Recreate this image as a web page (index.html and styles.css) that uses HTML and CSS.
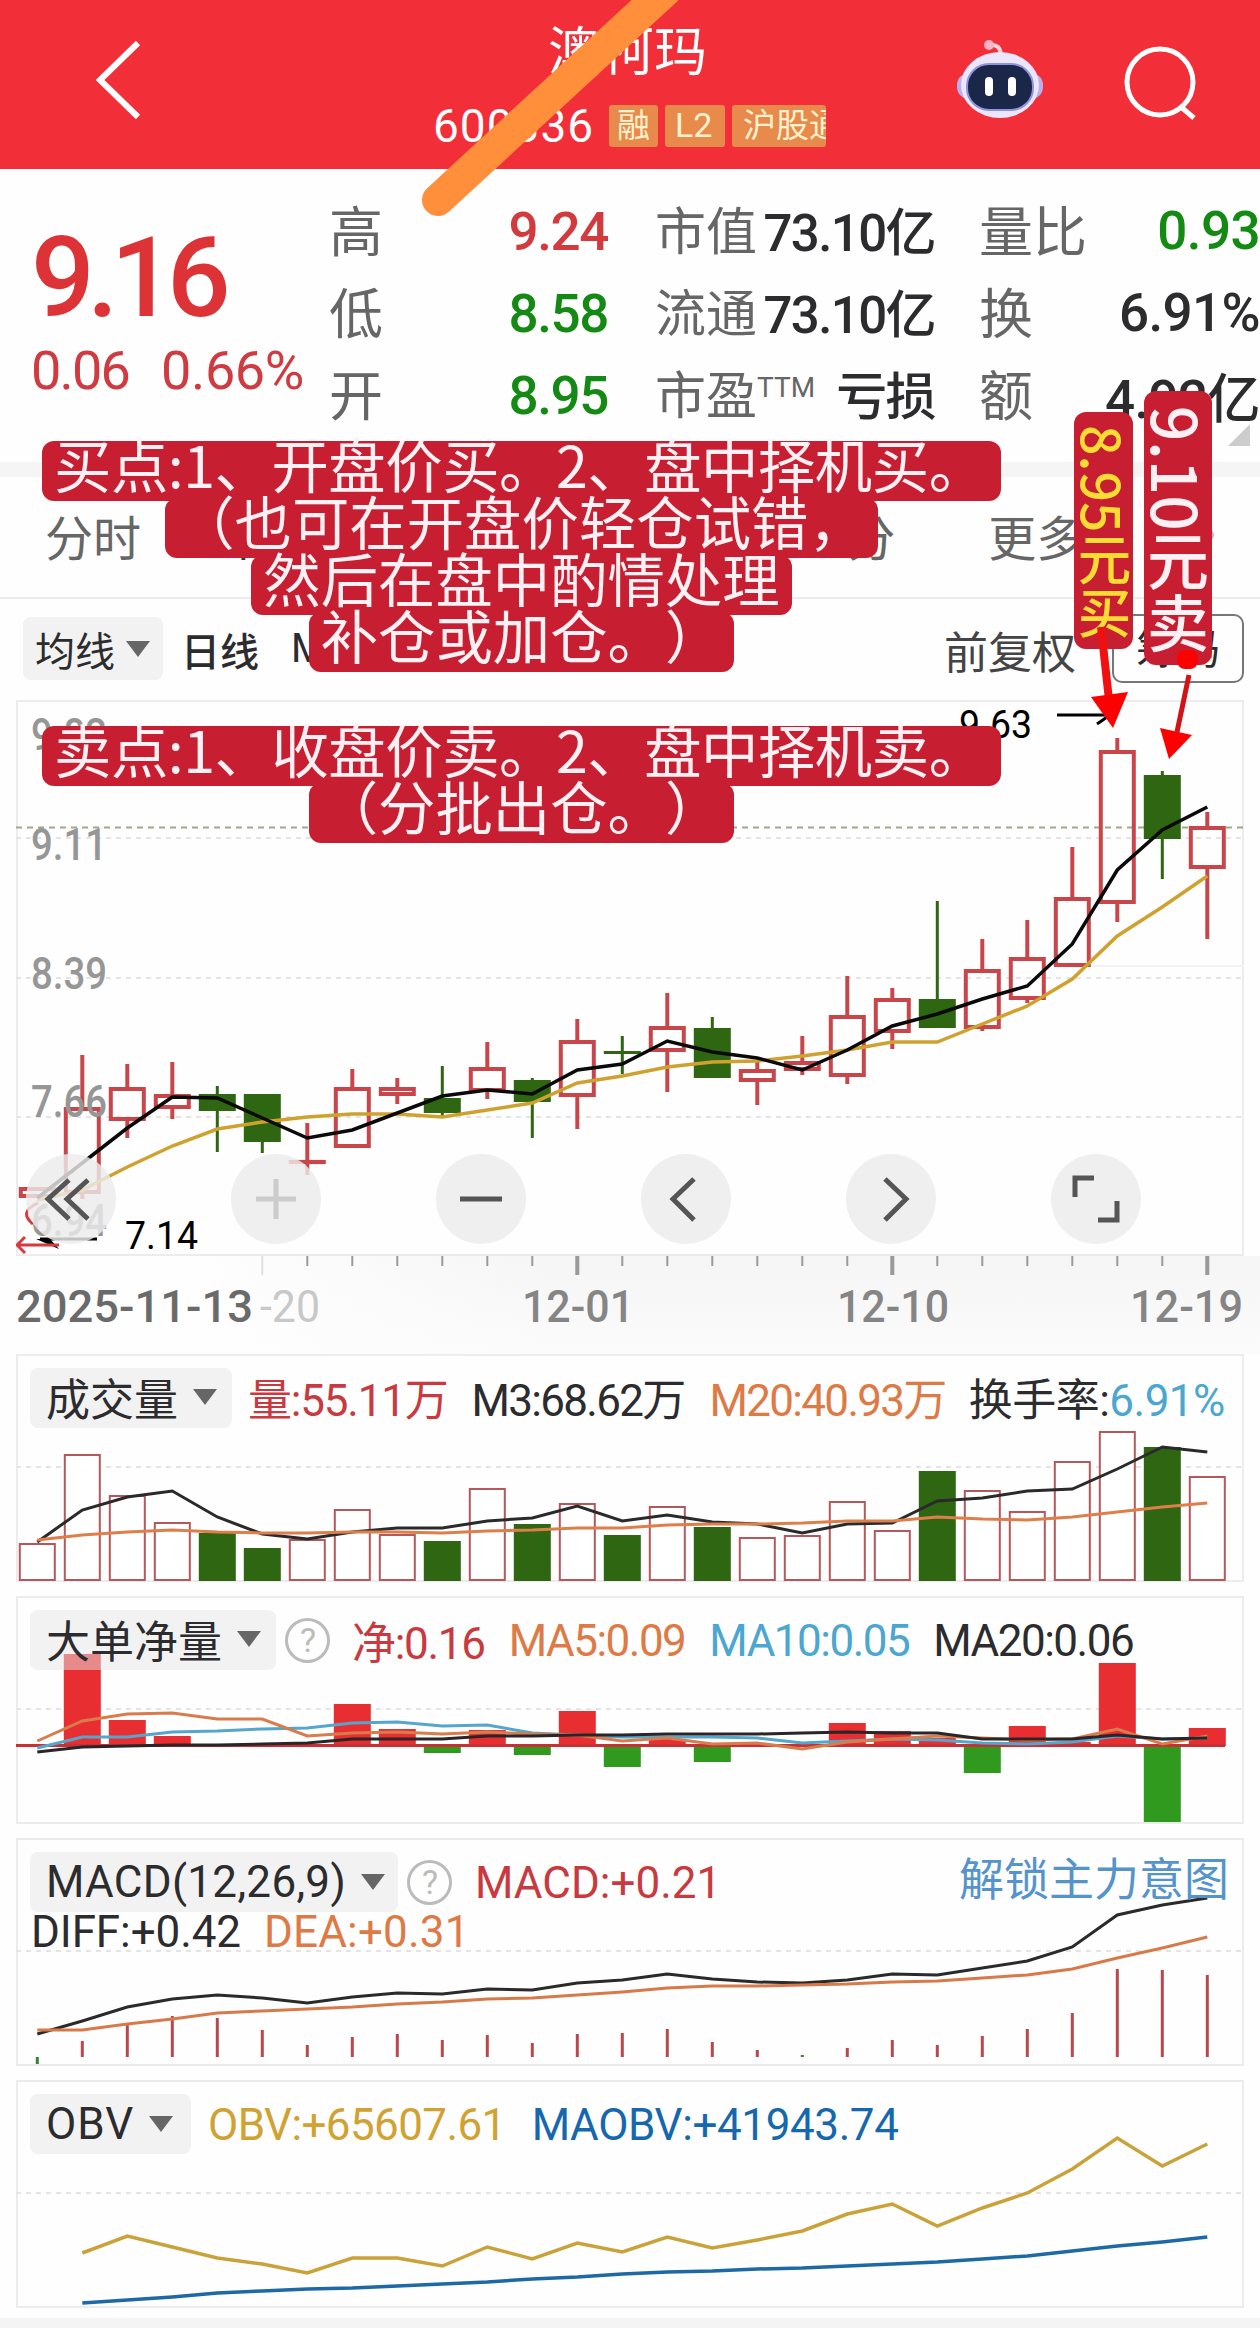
FILE: index.html
```html
<!DOCTYPE html>
<html lang="zh-CN">
<head>
  <meta charset="utf-8">
  <meta name="viewport" content="width=device-width,initial-scale=1">
  <title>澳柯玛 600336</title>
  <link rel="stylesheet" href="styles.css">
</head>
<body>

  <header class="topbar">
    <svg class="back" width="48" height="84" viewBox="0 0 48 84"><path d="M43 5 5 42 43 79"/></svg>
    <div class="stock">
      <h1>澳柯玛</h1>
      <div class="code-row">
        <span class="code">600336</span>
        <span class="tag">融</span>
        <span class="tag tag-l2">L2</span>
        <span class="tag tag-cut">沪股通</span>
      </div>
    </div>
    <svg class="robot" width="90" height="82" viewBox="0 0 90 82">
      <path d="M46 18 Q45 7 36 8" fill="none" stroke="#ffd3dc" stroke-width="4"/>
      <circle cx="34" cy="8" r="5" fill="#ffb3c4"/>
      <rect x="2" y="36" width="86" height="26" rx="12" fill="#b9b0ee"/>
      <ellipse cx="45" cy="48" rx="39" ry="33" fill="#ebe6fb"/>
      <rect x="12" y="27" width="66" height="46" rx="22" fill="#1b2749" stroke="#8f93dc" stroke-width="2"/>
      <rect x="30" y="40" width="8" height="19" rx="4" fill="#fff"/>
      <rect x="53" y="40" width="8" height="19" rx="4" fill="#fff"/>
    </svg>
    <svg class="search" width="76" height="76" viewBox="0 0 76 76"><circle cx="37" cy="37" r="33"/><path d="M58 62 71 73"/></svg>
  </header>

  <section class="quote">
    <div class="price">
      <div class="now">9.16</div>
      <div class="change"><span>0.06</span><span class="pct">0.66%</span></div>
    </div>
    <dl class="col col-a">
      <dt>高</dt><dd class="up">9.24</dd>
      <dt>低</dt><dd class="down">8.58</dd>
      <dt>开</dt><dd class="down">8.95</dd>
    </dl>
    <dl class="col col-b">
      <dt>市值</dt><dd>73.10亿</dd>
      <dt>流通</dt><dd>73.10亿</dd>
      <dt>市盈<sup>TTM</sup></dt><dd>亏损</dd>
    </dl>
    <dl class="col col-c">
      <dt>量比</dt><dd class="down">0.93</dd>
      <dt>换</dt><dd>6.91%</dd>
      <dt>额</dt><dd>4.92亿</dd>
    </dl>
    <i class="corner"></i>
  </section>

  <nav class="tabs">
    <span>分时</span>
    <span class="on">日K</span>
    <span class="minute">分</span>
    <span class="more">更多</span>
    <i class="dot"></i>
  </nav>

  <div class="toolbar">
    <span class="pick">均线<i class="caret"></i></span>
    <b>日线</b>
    <span class="m">M</span>
    <span class="adjust">前复权</span>
    <span class="chips">筹码</span>
  </div>

  <section class="kline">
    <svg id="kline" viewBox="16 700 1228 556" width="1228" height="556"></svg>
    <div class="controls">
      <button><svg viewBox="0 0 90 90"><path d="M43 26 22 45 43 65M62 26 41 45 62 65"/></svg></button>
      <button class="off"><svg viewBox="0 0 90 90"><path d="M25 45H65M45 25V65"/></svg></button>
      <button><svg viewBox="0 0 90 90"><path d="M24 45H66"/></svg></button>
      <button><svg viewBox="0 0 90 90"><path d="M53 25 32 45 53 66"/></svg></button>
      <button><svg viewBox="0 0 90 90"><path d="M39 25 60 45 39 66"/></svg></button>
      <button><svg viewBox="0 0 90 90"><path d="M24 43V24H43M66 47V66H47"/></svg></button>
    </div>
  </section>
  <div class="dates"><svg id="dates" viewBox="16 1256 1244 98" width="1244" height="98"></svg></div>

  <section class="panel">
    <svg id="volume" viewBox="16 1354 1228 228" width="1228" height="228"></svg>
    <div class="legend">
      <span class="pick">成交量<i class="caret"></i></span>
      <span class="red vol">量:55.11万</span>
      <span class="ink m3">M3:68.62万</span>
      <span class="orange m20">M20:40.93万</span>
      <span class="ink hand">换手率:<em>6.91%</em></span>
    </div>
  </section>

  <section class="panel">
    <svg id="net" viewBox="16 1596 1228 228" width="1228" height="228"></svg>
    <div class="legend">
      <span class="pick">大单净量<i class="caret"></i></span>
      <span class="help">?</span>
      <span class="red net">净:0.16</span>
      <span class="orange ma5">MA5:0.09</span>
      <span class="blue ma10">MA10:0.05</span>
      <span class="ink ma20">MA20:0.06</span>
    </div>
  </section>

  <section class="panel">
    <svg id="macd" viewBox="16 1838 1228 228" width="1228" height="228"></svg>
    <div class="legend">
      <span class="pick params">MACD(12,26,9)<i class="caret"></i></span>
      <span class="help">?</span>
      <span class="red macd">MACD:+0.21</span>
      <a class="unlock">解锁主力意图</a>
    </div>
    <div class="legend second"><span class="ink diff">DIFF:+0.42</span><span class="orange dea">DEA:+0.31</span></div>
  </section>

  <section class="panel">
    <svg id="obv" viewBox="16 2080 1228 228" width="1228" height="228"></svg>
    <div class="legend">
      <span class="pick obv-pick">OBV<i class="caret"></i></span>
      <span class="gold obv">OBV:+65607.61</span>
      <span class="navy maobv">MAOBV:+41943.74</span>
    </div>
  </section>
  <footer></footer>

  <!-- notes drawn over the page -->
  <div class="note buy">
    <p>买点:1、开盘价买。2、盘中择机买。</p>
    <p>（也可在开盘价轻仓试错，</p>
    <p>然后在盘中酌情处理</p>
    <p>补仓或加仓。）</p>
  </div>
  <div class="note sell">
    <p>卖点:1、收盘价卖。2、盘中择机卖。</p>
    <p>（分批出仓。）</p>
  </div>
  <div class="flag flag-buy">8.95元买</div>
  <div class="flag flag-sell">9.10元卖</div>
  <svg class="marks" width="1260" height="780" viewBox="0 0 1260 780">
    <path d="M438 200 665 -9" stroke="#ff8f3a" stroke-width="32" stroke-linecap="round"/>
    <path d="M1101 627 1109 700" stroke="#f01010" stroke-width="8"/>
    <path d="M1091 697 1128 692 1113 728Z" fill="#fe0000"/>
    <rect x="1177" y="650" width="21" height="19" rx="8" fill="#fe0000"/>
    <path d="M1189 675 1177 732" stroke="#d31217" stroke-width="5"/>
    <path d="M1160 728 1192 735 1169 759Z" fill="#fe0000"/>
  </svg>

  <script src="chart.js"></script>
</body>
</html>
```
FILE: styles.css
```css
:root {
  --red: #f22e38;
  --up: #d23a3e;
  --down: #148a14;
  --ink: #2c2c2e;
  --orange: #dd7a45;
  --note: #c71f31;
}
* { margin:0; padding:0; box-sizing:border-box; }
body {
  position:relative;
  width:1260px; height:2328px;
  overflow:hidden;
  background:#fefefe;
  color:var(--ink);
  font-family:Roboto,"Noto Sans CJK SC",sans-serif;
}
svg { display:block; }
i, em { font-style:normal; }

.topbar {
  display:flex;
  height:169px;
  background:var(--red);
  color:#fff;
}
.back { margin:38px 0 0 95px; fill:none; stroke:#fff; stroke-width:6; }
.stock { width:392px; margin-left:291px; }
.stock h1 {
  margin-top:23px; padding-left:114px;
  font-size:53px; line-height:60px; font-weight:400;
}
.code-row { display:flex; align-items:center; height:42px; margin-top:22px; gap:7px; overflow:hidden; }
.code { width:169px; font-size:46px; letter-spacing:1px; margin-left:-1px; }
.tag {
  flex:none;
  width:49px; height:42px; padding:0 8px;
  border-radius:3px;
  background:#e98a4d; color:#fff3cf;
  font-size:33px; line-height:41px;
  white-space:nowrap;
}
.tag-l2 { width:60px; padding-left:10px; font-size:34px; }
.tag-cut { width:94px; padding-left:11px; overflow:hidden; }
.robot { margin:37px 0 0 129px; }
.search { margin:45px 0 0 78px; fill:none; stroke:#fff; stroke-width:5; }

.quote { position:relative; display:flex; height:293px; }
.price { width:329px; padding:51px 0 0 31px; color:#dd3236; }
.now { font-size:112px; line-height:116px; font-weight:500; letter-spacing:-7.5px; }
.change { display:flex; margin-top:3px; font-size:54px; line-height:64px; letter-spacing:-1.8px; gap:32px; color:#cf3b40; }
.change .pct { letter-spacing:-.4px; }
.col {
  display:grid;
  grid-template-columns:100px 1fr;
  grid-auto-rows:82px;
  align-items:center;
  height:246px; margin-top:20px;
  font-size:54px;
}
.col dt { color:#666; white-space:nowrap; margin-top:-4px; }
.col dd { text-align:right; font-size:53px; letter-spacing:-1.4px; font-weight:500; white-space:nowrap; }
.col-a { width:279px; }
.col-b { width:281px; margin-left:47px; font-size:51px; }
.col-c { width:281px; margin-left:43px; }
.col-a dd { padding-top:3px; }
.col-b dd, .col-c dd { color:#2c2c2e; margin-top:-2px; }
.col-b dd { margin-right:1px; font-size:51px; letter-spacing:-1.6px; }
.col-c dd { letter-spacing:-.6px; padding-top:3px; }
.col-a .up { color:var(--up); }
.col .down, .col-c dd.down { color:var(--down); }
sup { font-size:28px; vertical-align:17px; line-height:0; }
.corner {
  position:absolute; right:10px; bottom:16px;
  border-left:22px solid transparent; border-bottom:22px solid #ccc;
}

.tabs {
  display:flex; align-items:center;
  height:137px; padding:0 0 4px 45px;
  border-top:15px solid #f5f5f5;
  border-bottom:2px solid #ececec;
  font-size:48px; color:#666;
}
.tabs .on { margin-left:92px; color:#333; }
.tabs .minute { margin-left:536px; }
.tabs .more { margin-left:93px; }
.tabs .dot { width:12px; height:12px; border-radius:6px; margin-left:118px; background:#c9b6b6; }

.toolbar { display:flex; align-items:center; height:101px; padding:0 16px 2px 23px; font-size:39px; }
.pick {
  display:flex; align-items:center;
  background:rgba(229,229,229,.5);
  border-radius:8px;
}
.caret { border:12px solid transparent; border-top:16px solid #666; border-bottom:0; }
.toolbar .pick { height:63px; width:140px; padding-left:12px; font-size:40px; }
.toolbar .caret { margin-left:11px; }
.toolbar b { margin-left:18px; font-weight:500; }
.toolbar .m { margin-left:32px; font-size:40px; }
.adjust { margin-left:618px; padding-top:2px; font-size:44px; color:#444; }
.chips {
  margin-left:auto;
  width:132px; height:69px;
  padding-left:22px;
  border:2px solid #777; border-radius:10px;
  font-size:42px; line-height:68px;
}

.kline { position:relative; margin-left:16px; height:556px; width:1228px; }
.controls {
  position:absolute; left:10px; top:454px;
  display:flex; gap:115px;
}
.controls button {
  width:90px; height:90px; border:0; border-radius:50%;
  background:rgba(235,235,235,.82);
}
.controls path { fill:none; stroke:#555; stroke-width:5; }
.controls .off path { stroke:#ccc; }
.dates { height:98px; padding-left:16px; background:linear-gradient(90deg,#fefefe 15%,transparent 45%),linear-gradient(#f5f5f5,#fbfbfb); }

.panel { position:relative; width:1228px; height:228px; margin:0 0 14px 16px; }
.panel > svg { position:absolute; left:0; top:0; }
.legend {
  position:relative;
  display:flex; align-items:center;
  height:60px; padding-left:14px;
  top:14px;
  font-size:44px;
  white-space:nowrap;
}
.legend span { letter-spacing:-1.3px; }
.legend .pick { height:60px; padding:0 15px 2px 16px; letter-spacing:0; }
.legend .caret { margin-left:15px; }
.legend .params { width:368px; padding-bottom:0; letter-spacing:.3px; }
.legend .obv-pick { width:161px; padding-bottom:0; letter-spacing:1px; }
.legend.second { height:40px; padding-left:15px; font-size:44px; }
.legend .help {
  width:45px; height:45px; margin-left:9px;
  border:3px solid #bbb; border-radius:50%;
  color:#bbb; font-size:34px; line-height:39px; text-align:center;
}
.red { color:#c83a40; }
.ink { color:var(--ink); }
.orange { color:var(--orange); }
.blue { color:#4ba6d0; }
.gold { color:#d0a232; }
.navy { color:#1668ae; }
.legend em { color:#4ba6d0; }
.vol, .m3, .m20, .hand { padding-bottom:3px; }
.legend .vol { margin-left:16px; letter-spacing:-1.2px; }
.legend .m3 { margin-left:24px; letter-spacing:-1.7px; }
.legend .m20 { margin-left:25px; letter-spacing:-1.7px; }
.legend .hand { margin-left:23px; letter-spacing:-.5px; }
.net { margin-left:22px; }
.ma5, .ma10, .ma20 { margin-left:24px; }
.legend .ma5, .legend .ma10, .legend .ma20 { letter-spacing:-1.5px; padding-top:2px; }
.legend .macd { margin-left:23px; letter-spacing:0; padding-top:2px; }
.unlock { margin-left:auto; margin-right:15px; color:#5594cb; font-size:45px; line-height:56px; padding-bottom:3px; }
.legend .diff { letter-spacing:-.1px; }
.legend .dea { margin-left:23px; letter-spacing:.2px; }
.legend .obv { margin-left:17px; letter-spacing:-.6px; padding-top:2px; }
.legend .maobv { margin-left:26px; letter-spacing:-.4px; padding-top:2px; }
footer { height:10px; margin-top:-4px; background:#f4f4f4; }

.note {
  position:absolute; left:42px; width:959px;
  display:flex; flex-direction:column; align-items:center;
  font-family:"Noto Sans CJK SC",sans-serif;
  font-size:57.4px; line-height:44px; color:#fff0f4;
  text-spacing-trim:space-all;
}
.note p {
  height:60px; margin-bottom:-3px; padding:0 12px;
  border-radius:12px;
  background:var(--note);
  white-space:nowrap;
}
.note p:first-child { width:959px; letter-spacing:-.5px; }
.buy { top:441px; }
.sell { top:726px; }
.flag {
  position:absolute;
  writing-mode:vertical-rl;
  border-radius:12px;
  background:var(--note);
  font-family:"Noto Sans CJK SC",sans-serif;
  font-weight:500;
  white-space:nowrap;
}
.flag-buy { left:1074px; top:412px; width:59px; height:237px; padding-top:13px; font-size:53.5px; line-height:57px; color:#fbdc35; }
.flag-sell { left:1144px; top:391px; width:68px; height:274px; padding-top:15px; font-size:62px; line-height:68px; color:#fff0f4; }
.marks { position:absolute; left:0; top:0; fill:none; }
```
FILE: chart.js
```js
const RED = '#c8454a', GREEN = '#2f6612';
const cx = i => 37.3 + 45 * i;

// [top wick, body top, body bottom, bottom wick, falling]
const candles = [
  [1187,1189,1196,1197],[1055,1109,1192,1199],[1064,1089,1119,1138],[1062,1096,1107,1119],
  [1086,1094,1111,1152,1],[1094,1094,1142,1153,1],[1123,1161.9,1162.1,1175],[1069,1089,1146,1147],
  [1078,1089,1094,1104],[1066,1098,1113,1117,1],[1042,1069,1090,1099],[1078,1080,1102,1138,1],
  [1019,1042,1095,1129],[1036,1051,1054,1074,1],[993,1028,1050,1092],[1017,1028,1078,1078,1],
  [1061,1071,1080,1105],[1036,1063,1069,1075],[976,1017,1075,1084],[988,1000,1031,1049],
  [901,999,1028,1028,1],[939,971,1027,1031],[920,959,998,1003],[847,899,965,966],
  [738,752,902,922],[771,775,839,879,1],[812,828,867,939]
];

function line(ys, color, w, from = 0) {
  const pts = ys.map((y, i) => cx(i + from) + ',' + y).join(' ');
  return `<polyline points="${pts}" fill="none" stroke="${color}" stroke-width="${w}"/>`;
}
function seg(x1, y1, x2, y2, color, w, extra = '') {
  return `<line x1="${x1}" y1="${y1}" x2="${x2}" y2="${y2}" stroke="${color}" stroke-width="${w}" ${extra}/>`;
}
function box(i, y1, y2, fill, stroke = 'none', w = 0) {
  return `<rect x="${cx(i) - 18.5 + w / 2}" y="${y1}" width="${37 - w}" height="${y2 - y1}" fill="${fill}" stroke="${stroke}" stroke-width="${w}"/>`;
}
function label(x, y, str, len, size, color, extra = '') {
  return `<text x="${x}" y="${y}" font-size="${size}" fill="${color}" textLength="${len}" lengthAdjust="spacingAndGlyphs" ${extra}>${str}</text>`;
}
function frame(y1, y2, grid) {
  return `<rect x="17" y="${y1 + 1}" width="1226" height="${y2 - y1 - 2}" fill="none" stroke="#ececec" stroke-width="2"/>` +
    grid.map(y => seg(16, y, 1244, y, '#e4e4e4', 2, 'stroke-dasharray="5 5"')).join('');
}
function draw(id, s) { document.getElementById(id).innerHTML = s; }

// K line
let s = frame(700, 1256, [838, 978, 1117]);
s += seg(16, 827.5, 1244, 827.5, '#a3a58d', 2, 'stroke-dasharray="6 5"');
s += seg(1093, 966, 1244, 966, '#f3f3f3', 2);
candles.forEach(([h, t, b, l, fall], i) => {
  if (fall) {
    s += seg(cx(i), h, cx(i), l, GREEN, 3) + box(i, t, b, GREEN);
  } else {
    s += seg(cx(i), h, cx(i), t, RED, 4) + seg(cx(i), b, cx(i), l, RED, 4);
    s += box(i, t, b, 'none', RED, 4);
  }
});
[['9.83', 750], ['9.11', 860], ['8.39', 989], ['7.66', 1117], ['6.94', 1236]].forEach(([t, y]) => {
  s += label(31, y, t, 76, 44, '#969696', 'font-weight="500"');
});
s += line([1200,1190,1167,1146,1129,1122,1117,1114,1114,1117,1110,1103,1083,1076,1067,1062,1061,1056,1050,1042,1042,1024,1006,979,936,907,876], '#cfa22f', 3.5);
s += line([1198,1163,1128,1097,1098,1118,1138,1130,1113,1096,1090,1094,1070,1064,1041,1052,1058,1070,1050,1026,1014,999,986,944,870,830,807], '#0a0a0a', 3.5);
s += label(959, 738, '9.63', 73, 39, '#000') + label(125, 1249, '7.14', 73, 39, '#000');
s += seg(1057, 715, 1110, 715, '#000', 3) + seg(1097, 724, 1110, 715, '#000', 3);
s += seg(40, 1239, 97, 1239, '#000', 3) + '<path d="M36 1239 59 1249 50 1239Z"/>';
s += '<path d="M38 1203Q18 1212 33 1224M38 1245H59M17 1245H58M25 1237 17 1245 25 1253" fill="none" stroke="#d8393d" stroke-width="3"/>';
draw('kline', s);

// dates
s = '';
for (let i = 5; i < 27; i++) {
  const big = i === 5 || i === 12 || i === 19 || i === 26;
  s += seg(cx(i), 1256, cx(i), big ? 1275 : 1266, i === 5 ? '#e0e0e0' : '#999', big && i > 5 ? 4 : 2);
}
s += label(16, 1322, '2025-11-13', 237, 44, '#6a6a6a', 'font-weight="500"');
s += label(260, 1322, '-20', 60, 44, '#c8c8c8');
s += label(522, 1322, '12-01', 112, 44, '#858585', 'font-weight="500"');
s += label(837, 1322, '12-10', 112, 44, '#858585', 'font-weight="500"');
s += label(1130, 1322, '12-19', 113, 44, '#858585', 'font-weight="500"');
draw('dates', s);

// volume
const vol = [1544,1455,1496,1523,1533,1548,1540,1510,1535,1541,1489,1524,1504,1535,1507,1527,1538,1536,1502,1531,1471,1491,1512,1462,1432,1447,1477];
s = frame(1354, 1582, [1467]);
vol.forEach((y, i) => {
  const fall = candles[i][4];
  s += box(i, y, fall ? 1581 : 1580, fall ? GREEN : '#fff', fall ? 'none' : '#b4585b', fall ? 0 : 2);
});
s += line([1542,1510,1497,1491,1517,1534,1539,1532,1528,1528,1521,1518,1506,1521,1515,1522,1524,1533,1524,1523,1501,1498,1491,1489,1469,1447,1452], '#2a2a2a', 3);
s += line([1540,1535,1532,1530,1532,1533,1533,1532,1532,1533,1531,1530,1528,1528,1525,1524,1524,1523,1521,1521,1517,1519,1520,1517,1512,1507,1503], '#de7f4b', 3);
draw('volume', s);

// big order net volume
const net = {1:1654,2:1720,3:1736,7:1704,8:1729,10:1730,12:1711,14:1739,18:1723,19:1731,20:1738,22:1726,23:1742,24:1663,26:1728,
  9:1753,11:1755,13:1767,15:1762,21:1773,25:1822};
s = frame(1596, 1824, [1709]);
for (const i in net) {
  s += net[i] < 1745 ? box(+i, net[i], 1746, '#e92e31') : box(+i, 1746, net[i], '#2f9a1e');
}
s += seg(16, 1745.5, 1225, 1745.5, '#c93036', 3);
s += line([1748,1737,1737,1732,1731,1729,1728,1723,1722,1726,1725,1733,1735,1737,1737,1737,1738,1743,1741,1739,1740,1743,1744,1742,1736,1739,1738], '#55a6cc', 3);
s += line([1741,1721,1714,1713,1719,1719,1736,1733,1732,1734,1732,1734,1735,1741,1738,1744,1743,1749,1742,1739,1736,1738,1740,1739,1729,1744,1736], '#d87c4c', 3);
s += line([1752,1747,1746,1745,1745,1744,1743,1739,1739,1739,1736,1736,1735,1735,1734,1734,1734,1733,1732,1733,1733,1739,1739,1739,1735,1739,1738], '#2a2528', 3);
draw('net', s);

// MACD
const bars = [2064,2041,2023,2016,2018,2030,2045,2037,2034,2040,2035,2043,2034,2033,2029,2042,2050,2055,2048,2040,2045,2036,2029,2013,1969,1970,1975];
s = frame(1838, 2066, [1951]);
bars.forEach((y, i) => { s += seg(cx(i), 2057, cx(i), y, i === 0 || i === 17 ? '#3b8038' : '#b8484c', 3); });
s += line([2034,2021,2007,1999,1995,1998,2003,1997,1993,1994,1989,1990,1983,1980,1974,1979,1982,1983,1980,1974,1975,1968,1961,1947,1915,1905,1898], '#2a2a2a', 3);
s += line([2030,2030,2024,2019,2013,2011,2009,2007,2004,2002,1999,1998,1995,1992,1988,1986,1986,1985,1984,1982,1981,1978,1975,1969,1958,1948,1937], '#d8794a', 3);
draw('macd', s);

// OBV
s = frame(2080, 2308, [2193]);
s += line([2253,2236,2247,2258,2264,2273,2258,2258,2266,2247,2259,2243,2252,2237,2248,2240,2231,2214,2204,2226,2208,2193,2169,2138,2166,2144], '#c9a33a', 3.5, 1);
s += line([2303,2300,2297,2293,2291,2289,2288,2286,2284,2282,2279,2277,2274,2272,2271,2269,2268,2266,2264,2262,2259,2256,2251,2246,2242,2237], '#1d69a5', 3.5, 1);
draw('obv', s);
```
